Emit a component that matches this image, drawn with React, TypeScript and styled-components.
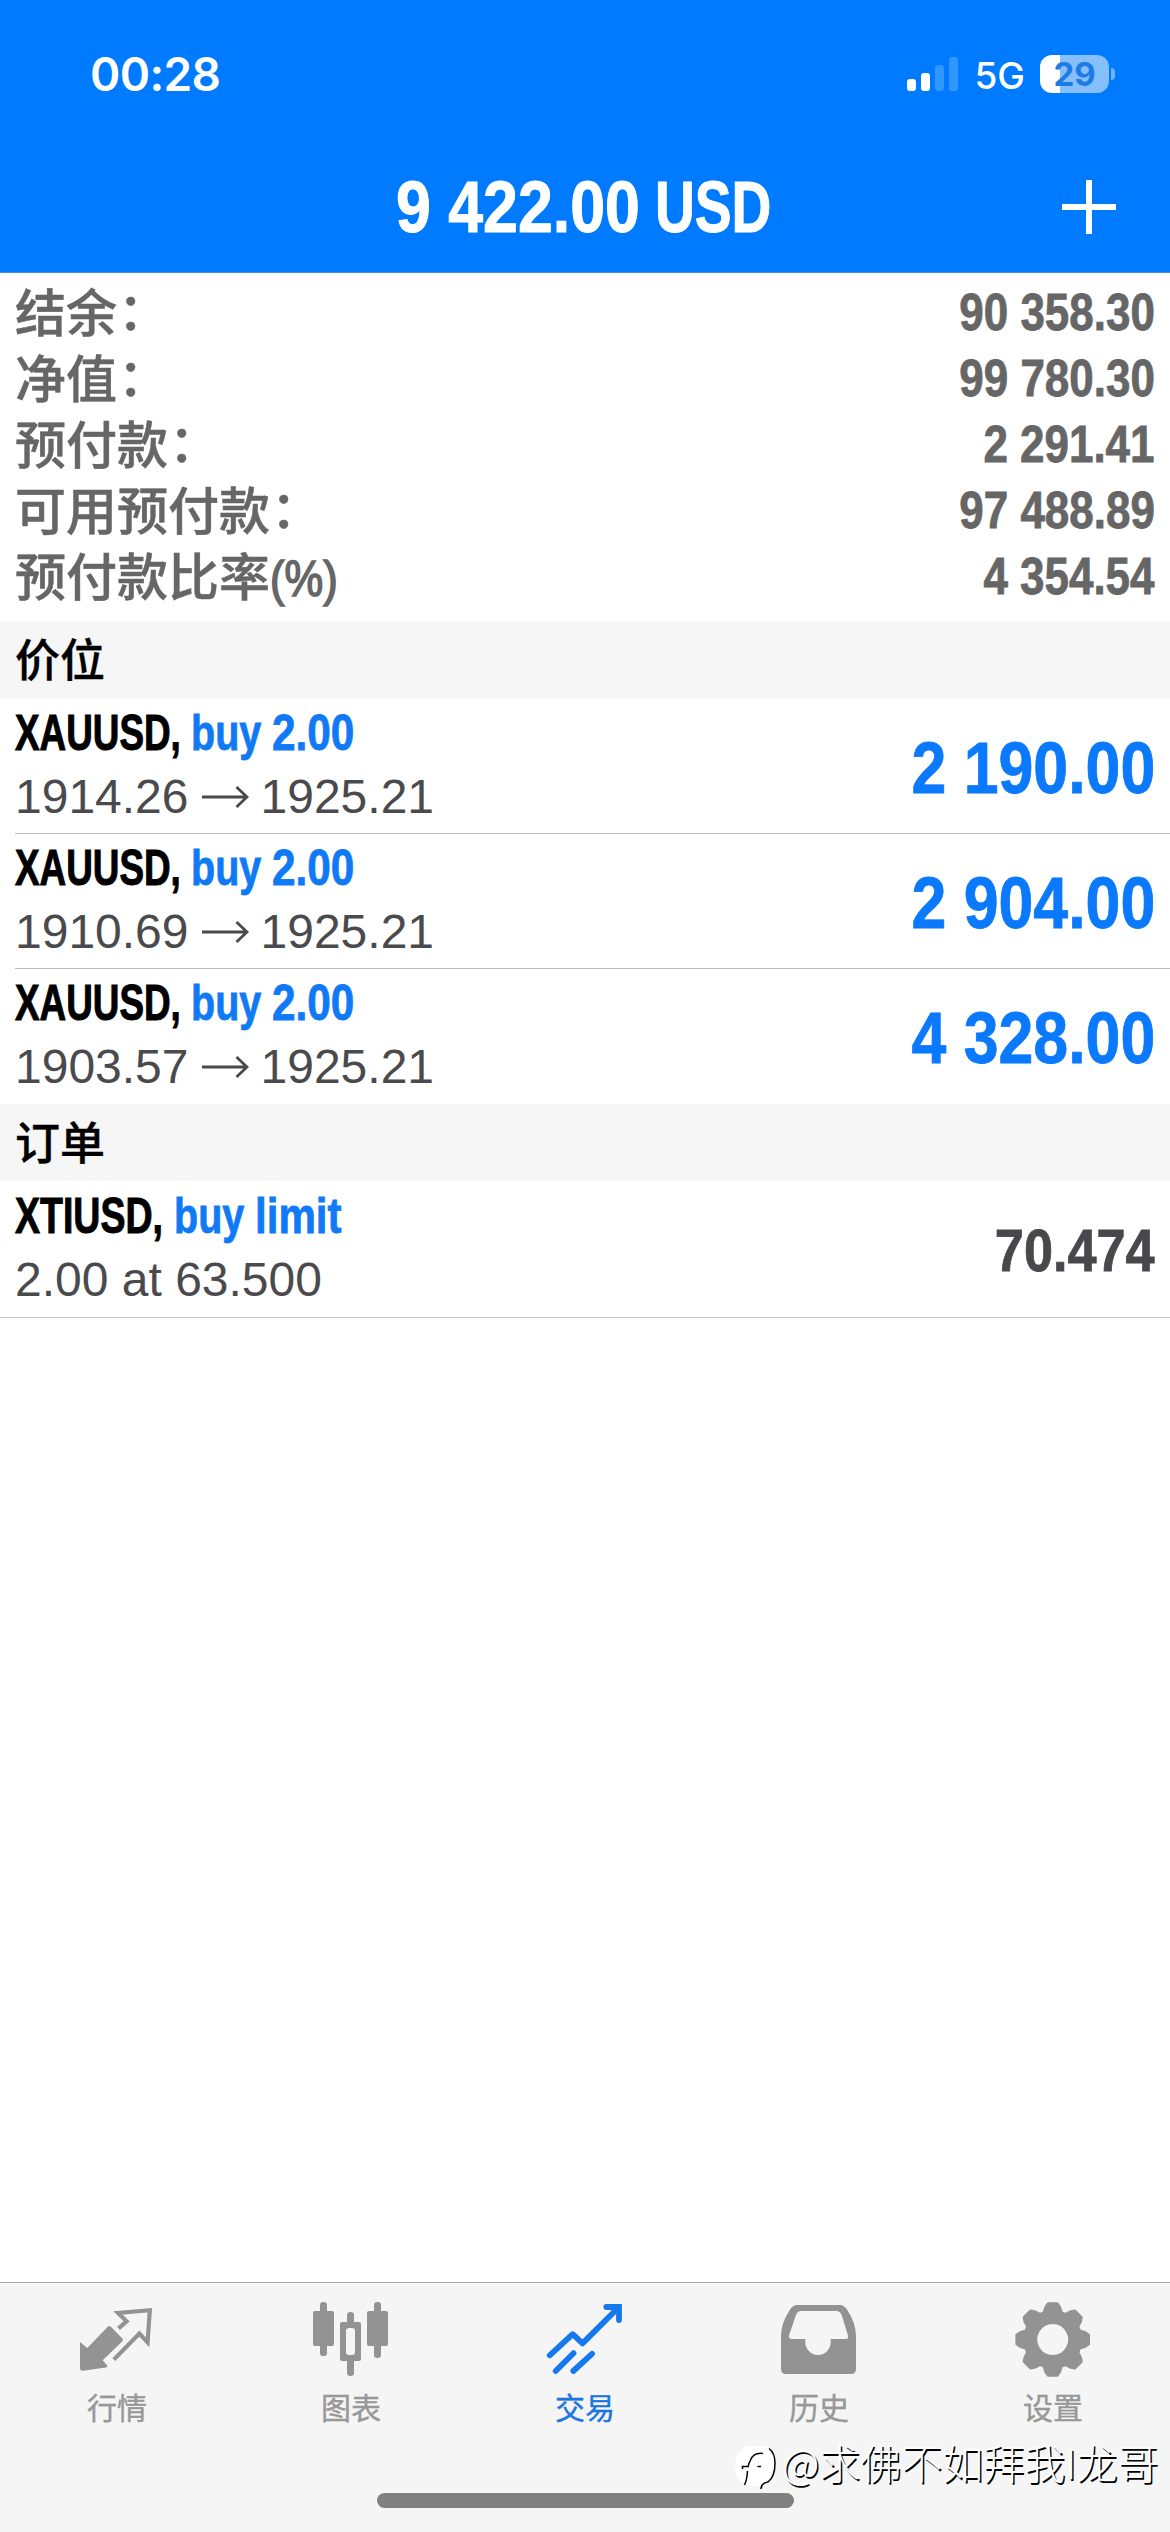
import React from "react";
import styled, { createGlobalStyle } from "styled-components";

const latin = `"Liberation Sans", Arial, "Noto Sans CJK SC", sans-serif`;
const system = `Inter, "Noto Sans CJK SC", sans-serif`;
const cjk = `"Noto Sans CJK SC", "Liberation Sans", sans-serif`;
const blue = "#007aff";
const gray = "#939393";

const GlobalStyle = createGlobalStyle`
  * { box-sizing: border-box; }
  html, body { margin: 0; padding: 0; background: #fff; }
`;

const Screen = styled.div`
  position: relative;
  width: 1170px;
  height: 2532px;
  display: flex;
  flex-direction: column;
  background: #fff;
  font-family: ${latin};
  overflow: hidden;
`;

const Header = styled.header`
  height: 273px;
  flex: none;
  background: ${blue};
  border-bottom: 1px solid #4a86c8;
  color: #fff;
`;

const StatusBar = styled.div`
  height: 148px;
  padding: 0 55px 0 90px;
  display: flex;
  align-items: center;
  justify-content: space-between;
  font-family: ${system};
`;

const Clock = styled.time`
  font-size: 46px;
  font-weight: 600;
  line-height: 60px;
  letter-spacing: -0.6px;
`;

const StatusRight = styled.div`
  display: flex;
  align-items: center;
`;

const Bars = styled.div`
  display: flex;
  align-items: flex-end;
  gap: 5px;
  height: 34px;
`;

const Bar = styled.i<{ $h: number; $on?: boolean }>`
  width: 9px;
  height: ${(p) => p.$h}px;
  border-radius: 3px;
  background: ${(p) => (p.$on ? "#fff" : "#3097ff")};
`;

const Network = styled.span`
  font-size: 37px;
  font-weight: 500;
  line-height: 44px;
  margin: 4px 15px 0 16px;
`;

const Battery = styled.div`
  width: 69px;
  height: 38px;
  border-radius: 12px;
  background: linear-gradient(90deg, #fff 20px, #86bffc 20px);
  color: #1c7ce6;
  font-size: 33px;
  font-weight: 700;
  line-height: 38px;
  text-align: center;
`;

const Nub = styled.i`
  width: 4px;
  height: 12px;
  margin-left: 2px;
  border-radius: 0 5px 5px 0;
  background: #6fb4ff;
`;

const NavBar = styled.div`
  height: 117px;
  display: grid;
  grid-template-columns: 1fr auto 1fr;
  align-items: center;
`;

const Title = styled.h1`
  grid-column: 2;
  margin: 0;
  padding-right: 4px;
  display: flex;
  gap: 15px;
  font-size: 72px;
  font-weight: 700;
  line-height: 90px;
  -webkit-text-stroke: 1px #fff;
`;

const AddButton = styled.button`
  grid-column: 3;
  justify-self: end;
  margin: 0 54px 0 0;
  padding: 0;
  border: 0;
  background: none;
  color: #fff;
  width: 54px;
  height: 54px;
  line-height: 0;
`;

/* Horizontally condensed text run; $w is the width it takes in the line. */
const Condensed = styled.span<{ $x: number; $w?: number; $right?: boolean; $color?: string }>`
  display: inline-block;
  flex: none;
  white-space: nowrap;
  width: ${(p) => (p.$w ? `${p.$w}px` : "auto")};
  transform: scaleX(${(p) => p.$x});
  transform-origin: ${(p) => (p.$right ? "right" : "left")} center;
  color: ${(p) => p.$color ?? "inherit"};
`;

const Summary = styled.dl`
  margin: 0;
  padding: 7px 15px 11px;
  height: 348px;
  flex: none;
  color: #666;
`;

const SummaryRow = styled.div`
  height: 66px;
  display: flex;
  align-items: center;
  justify-content: space-between;
`;

const SummaryLabel = styled.dt`
  padding-top: 3px;
  font-size: 51px;
  font-weight: 500;
  line-height: 58px;
  -webkit-text-stroke: 0.5px #666;
`;

const Colon = styled.span`
  position: relative;
  top: -2px;
  left: 1px;
`;

const Percent = styled(Condensed)`
  font-size: 50px;
  font-weight: 400;
  line-height: 50px;
  -webkit-text-stroke: 1.6px #666;
`;

const SummaryValue = styled.dd`
  margin: 0;
  font-size: 51px;
  font-weight: 700;
  line-height: 60px;
  -webkit-text-stroke: 0.8px #666;
`;

const SectionTitle = styled.h2<{ $h: number }>`
  margin: 0;
  flex: none;
  height: ${(p) => p.$h}px;
  padding: 0 15px 5px;
  display: flex;
  align-items: center;
  background: #f6f6f6;
  color: #000;
  font-family: ${cjk};
  font-size: 45px;
  font-weight: 500;
  -webkit-text-stroke: 0.4px #000;
`;

const Row = styled.div<{ $line: "inset" | "none" | "full" }>`
  flex: none;
  height: ${(p) => (p.$line === "full" ? 137 : 135)}px;
  margin-left: ${(p) => (p.$line === "full" ? 0 : 15)}px;
  padding: 0 15px 0 ${(p) => (p.$line === "full" ? 15 : 0)}px;
  border-bottom: 1px solid
    ${(p) => ({ inset: "#bcbcbe", none: "transparent", full: "#c8c8ca" })[p.$line]};
  display: flex;
  align-items: center;
  justify-content: space-between;
`;

const RowMain = styled.div`
  margin-bottom: 3px;
`;

const Symbol = styled.div`
  display: flex;
  height: 64px;
  font-size: 50px;
  font-weight: 700;
  line-height: 65px;
  color: #000;
  -webkit-text-stroke: 1px currentColor;
`;

const Side = styled.span`
  display: flex;
  gap: 11px;
  margin-left: 10px;
  color: #1079f6;
  -webkit-text-stroke: 0.8px #1079f6;
`;

const Prices = styled.div`
  display: flex;
  align-items: center;
  height: 64px;
  font-size: 48px;
  line-height: 64px;
  color: #4a4a4d;
`;

const ArrowIcon = styled.svg`
  margin: 0 12px 0 13px;
`;

const Amount = styled.div<{ $size: number; $color: string }>`
  padding-top: 4px;
  font-size: ${(p) => p.$size}px;
  font-weight: 700;
  line-height: 90px;
  color: ${(p) => p.$color};
  -webkit-text-stroke: 0.8px ${(p) => p.$color};
`;

const Spacer = styled.div`
  flex: 1;
`;

const TabBar = styled.nav`
  flex: none;
  height: 250px;
  border-top: 1px solid #a8a8a8;
  background: #f5f5f5;
  display: flex;
  flex-direction: column;
  align-items: center;
`;

const Tabs = styled.div`
  width: 100%;
  height: 210px;
  display: grid;
  grid-template-columns: repeat(5, 1fr);
`;

const Tab = styled.div<{ $active?: boolean }>`
  padding-top: 17px;
  display: flex;
  flex-direction: column;
  align-items: center;
  color: ${(p) => (p.$active ? "#1578ee" : gray)};
`;

const TabLabel = styled.span<{ $active?: boolean }>`
  margin-top: 6px;
  font-family: ${cjk};
  font-size: 30px;
  line-height: 40px;
  color: ${(p) => (p.$active ? "#1a74e2" : "#989898")};
  -webkit-text-stroke: 0.4px currentColor;
`;

const HomeIndicator = styled.div`
  width: 417px;
  height: 15px;
  border-radius: 8px;
  background: #808080;
`;

const Watermark = styled.div`
  position: absolute;
  left: 732px;
  top: 2433px;
  display: flex;
  align-items: center;
  gap: 4px;
  font-family: ${cjk};
  font-size: 41px;
  font-weight: 300;
  line-height: 56px;
  white-space: nowrap;
  color: #fff;
  text-shadow: 1.5px 1.5px 0 #000;
`;

const summary = [
  { label: "结余", colon: "：", value: "90 358.30" },
  { label: "净值", colon: "：", value: "99 780.30" },
  { label: "预付款", colon: "：", value: "2 291.41" },
  { label: "可用预付款", colon: "：", value: "97 488.89" },
  { label: "预付款比率", percent: "(%)", value: "4 354.54" },
];

const positions = [
  { open: "1914.26", profit: "2 190.00" },
  { open: "1910.69", profit: "2 904.00" },
  { open: "1903.57", profit: "4 328.00" },
];

const QuotesIcon = () => (
  <svg width="80" height="80" viewBox="0 0 80 80">
    <path
      d="M3 42L10.3 48L31 26.6Q32.3 25.4 33.6 26.6L45.4 38.6Q46.6 40 45.2 41.4L25.7 60.2L30.3 65.5Q30.6 67 29 67.4L6 70.8Q3 71 3 68.5Z"
      fill="currentColor"
    />
    <path
      d="M41.5 28.4L49.6 21.3L41 12.9L72.8 10.2L70.6 42.4L62.4 33.6L36.8 59.6"
      fill="none"
      stroke="currentColor"
      strokeWidth="4.2"
    />
  </svg>
);

const ChartIcon = () => (
  <svg width="80" height="80" viewBox="0 0 80 80" fill="currentColor">
    <rect x="2" y="11" width="21" height="35" rx="2" />
    <rect x="9" y="2" width="7" height="54" rx="3" />
    <path
      fillRule="evenodd"
      d="M31 22H48Q50 22 50 24V59Q50 61 48 61H31Q29 61 29 59V24Q29 22 31 22ZM38 28Q35 28 35 31V52Q35 55 38 55H41Q44 55 44 52V31Q44 28 41 28Z"
    />
    <path d="M36 23V15Q36 12 39.500 12Q43 12 43 15V23ZM36 60V73Q36 76 39.500 76Q43 76 43 73V60Z" />
    <rect x="56" y="11" width="21" height="35" rx="2" />
    <rect x="63" y="2" width="7" height="56" rx="3" />
  </svg>
);

const TradeIcon = () => (
  <svg
    width="80"
    height="80"
    viewBox="0 0 80 80"
    fill="none"
    stroke="currentColor"
    strokeWidth="5.8"
    strokeLinecap="round"
    strokeLinejoin="round"
  >
    <path d="M4.700 55.300L27.700 34.200L37.500 43.400L73 8" />
    <path d="M61.300 7H74V20" strokeLinejoin="miter" />
    <path d="M10.700 71L28.500 53.200M28.300 71L47 53.800" />
  </svg>
);

const HistoryIcon = () => (
  <svg width="80" height="80" viewBox="0 0 80 80" fill="currentColor">
    <path
      fillRule="evenodd"
      d="M18 5H61Q65 5 68 9.500Q77 23 77 36V69Q77 74 72 74H7Q2 74 2 69V36Q2 23 11 9.500Q14 5 18 5ZM22 11Q18.500 11 17 15L10.200 35Q9 39 13 39H26.300V42A12.700 13 0 0 0 51.700 42V39H66.500Q70 39 69 35.500L63 16Q61.500 11 57 11Z"
    />
  </svg>
);

const gearPath = (() => {
  const pts: string[] = [];
  for (let i = 0; i < 8; i++) {
    const tooth: [number, number][] = [
      [28.6, -18.5],
      [33.5, -12.5],
      [36.6, -7.5],
      [36.6, 7.5],
      [33.5, 12.5],
      [28.6, 18.5],
    ];
    tooth.forEach(([r, off]) => {
      const a = ((i * 45 + off) * Math.PI) / 180;
      pts.push(`${(39.7 + r * Math.sin(a)).toFixed(2)} ${(39.5 - r * Math.cos(a)).toFixed(2)}`);
    });
  }
  return `M${pts.join("L")}Z M39.7 23.1a16.4 16.4 0 1 0 .01 0Z`;
})();

const SettingsIcon = () => (
  <svg width="80" height="80" viewBox="0 0 80 80">
    <path
      d={gearPath}
      fill="currentColor"
      fillRule="evenodd"
      stroke="currentColor"
      strokeWidth="2"
      strokeLinejoin="round"
    />
  </svg>
);

const WatermarkLogo = () => (
  <svg width="46" height="56" viewBox="0 0 46 56">
    <path
      d="M17 13H30Q43 14 43 29Q43 44 35 49Q30 50 29 55L26 53Q8 54 4 40Q1 26 8 18Q11 14 17 13Z"
      fill="#fff"
    />
    <path
      d="M37 15.500Q43 20 43 30Q43 44 36 49Q29 50 29 56M31 20.500Q22 19 18.500 27Q16.500 31 16 34M10.500 36V33.500H17M15.500 38Q15 47 12.500 52M25.500 33.500H29"
      fill="none"
      stroke="#000"
      strokeWidth="1.5"
    />
  </svg>
);

const tabs = [
  { label: "行情", Icon: QuotesIcon },
  { label: "图表", Icon: ChartIcon },
  { label: "交易", Icon: TradeIcon, active: true },
  { label: "历史", Icon: HistoryIcon },
  { label: "设置", Icon: SettingsIcon },
];

export default function App() {
  return (
    <>
      <GlobalStyle />
      <Screen>
        <Header>
          <StatusBar>
            <Clock>00:28</Clock>
            <StatusRight>
              <Bars>
                <Bar $h={12} $on />
                <Bar $h={18} $on />
                <Bar $h={26} />
                <Bar $h={34} />
              </Bars>
              <Network>5G</Network>
              <Battery>29</Battery>
              <Nub />
            </StatusRight>
          </StatusBar>
          <NavBar>
            <Title>
              <Condensed $x={0.87} $w={244}>9 422.00</Condensed>
              <Condensed $x={0.766} $w={116}>USD</Condensed>
            </Title>
            <AddButton aria-label="+">
              <svg width="54" height="54" viewBox="0 0 54 54" stroke="currentColor" strokeWidth="6">
                <path d="M0 27H54M27 0V54" />
              </svg>
            </AddButton>
          </NavBar>
        </Header>

        <Summary>
          {summary.map((s) => (
            <SummaryRow key={s.label}>
              <SummaryLabel>
                {s.label}
                {s.colon && <Colon>{s.colon}</Colon>}
                {s.percent && <Percent $x={0.87}>{s.percent}</Percent>}
              </SummaryLabel>
              <SummaryValue>
                <Condensed $x={0.862} $right>{s.value}</Condensed>
              </SummaryValue>
            </SummaryRow>
          ))}
        </Summary>

        <SectionTitle $h={78}>价位</SectionTitle>
        {positions.map((p, i) => (
          <Row key={p.open} $line={i < positions.length - 1 ? "inset" : "none"}>
            <RowMain>
              <Symbol>
                <Condensed $x={0.737} $w={166}>XAUUSD,</Condensed>
                <Side>
                  <Condensed $x={0.79} $w={70}>buy</Condensed>
                  <Condensed $x={0.847} $w={82}>2.00</Condensed>
                </Side>
              </Symbol>
              <Prices>
                {p.open}
                <ArrowIcon width="47" height="24" viewBox="0 0 47 24" fill="none" stroke="#4a4a4d" strokeWidth="2.8">
                  <path d="M0 12H45M34.500 2L45 12L34.500 22" />
                </ArrowIcon>
                1925.21
              </Prices>
            </RowMain>
            <Amount $size={72} $color="#0a79fb">
              <Condensed $x={0.87} $right>{p.profit}</Condensed>
            </Amount>
          </Row>
        ))}

        <SectionTitle $h={77}>订单</SectionTitle>
        <Row $line="full">
          <RowMain>
            <Symbol>
              <Condensed $x={0.75} $w={149}>XTIUSD,</Condensed>
              <Side>
                <Condensed $x={0.79} $w={70}>buy</Condensed>
                <Condensed $x={0.842} $w={87}>limit</Condensed>
              </Side>
            </Symbol>
            <Prices>2.00 at 63.500</Prices>
          </RowMain>
          <Amount $size={60} $color="#48484c">
            <Condensed $x={0.87} $right>70.474</Condensed>
          </Amount>
        </Row>

        <Spacer />

        <TabBar>
          <Tabs>
            {tabs.map(({ label, Icon, active }) => (
              <Tab key={label} $active={active}>
                <Icon />
                <TabLabel $active={active}>{label}</TabLabel>
              </Tab>
            ))}
          </Tabs>
          <HomeIndicator />
        </TabBar>

        <Watermark>
          <WatermarkLogo />
          <span>@求佛不如拜我I龙哥</span>
        </Watermark>
      </Screen>
    </>
  );
}
